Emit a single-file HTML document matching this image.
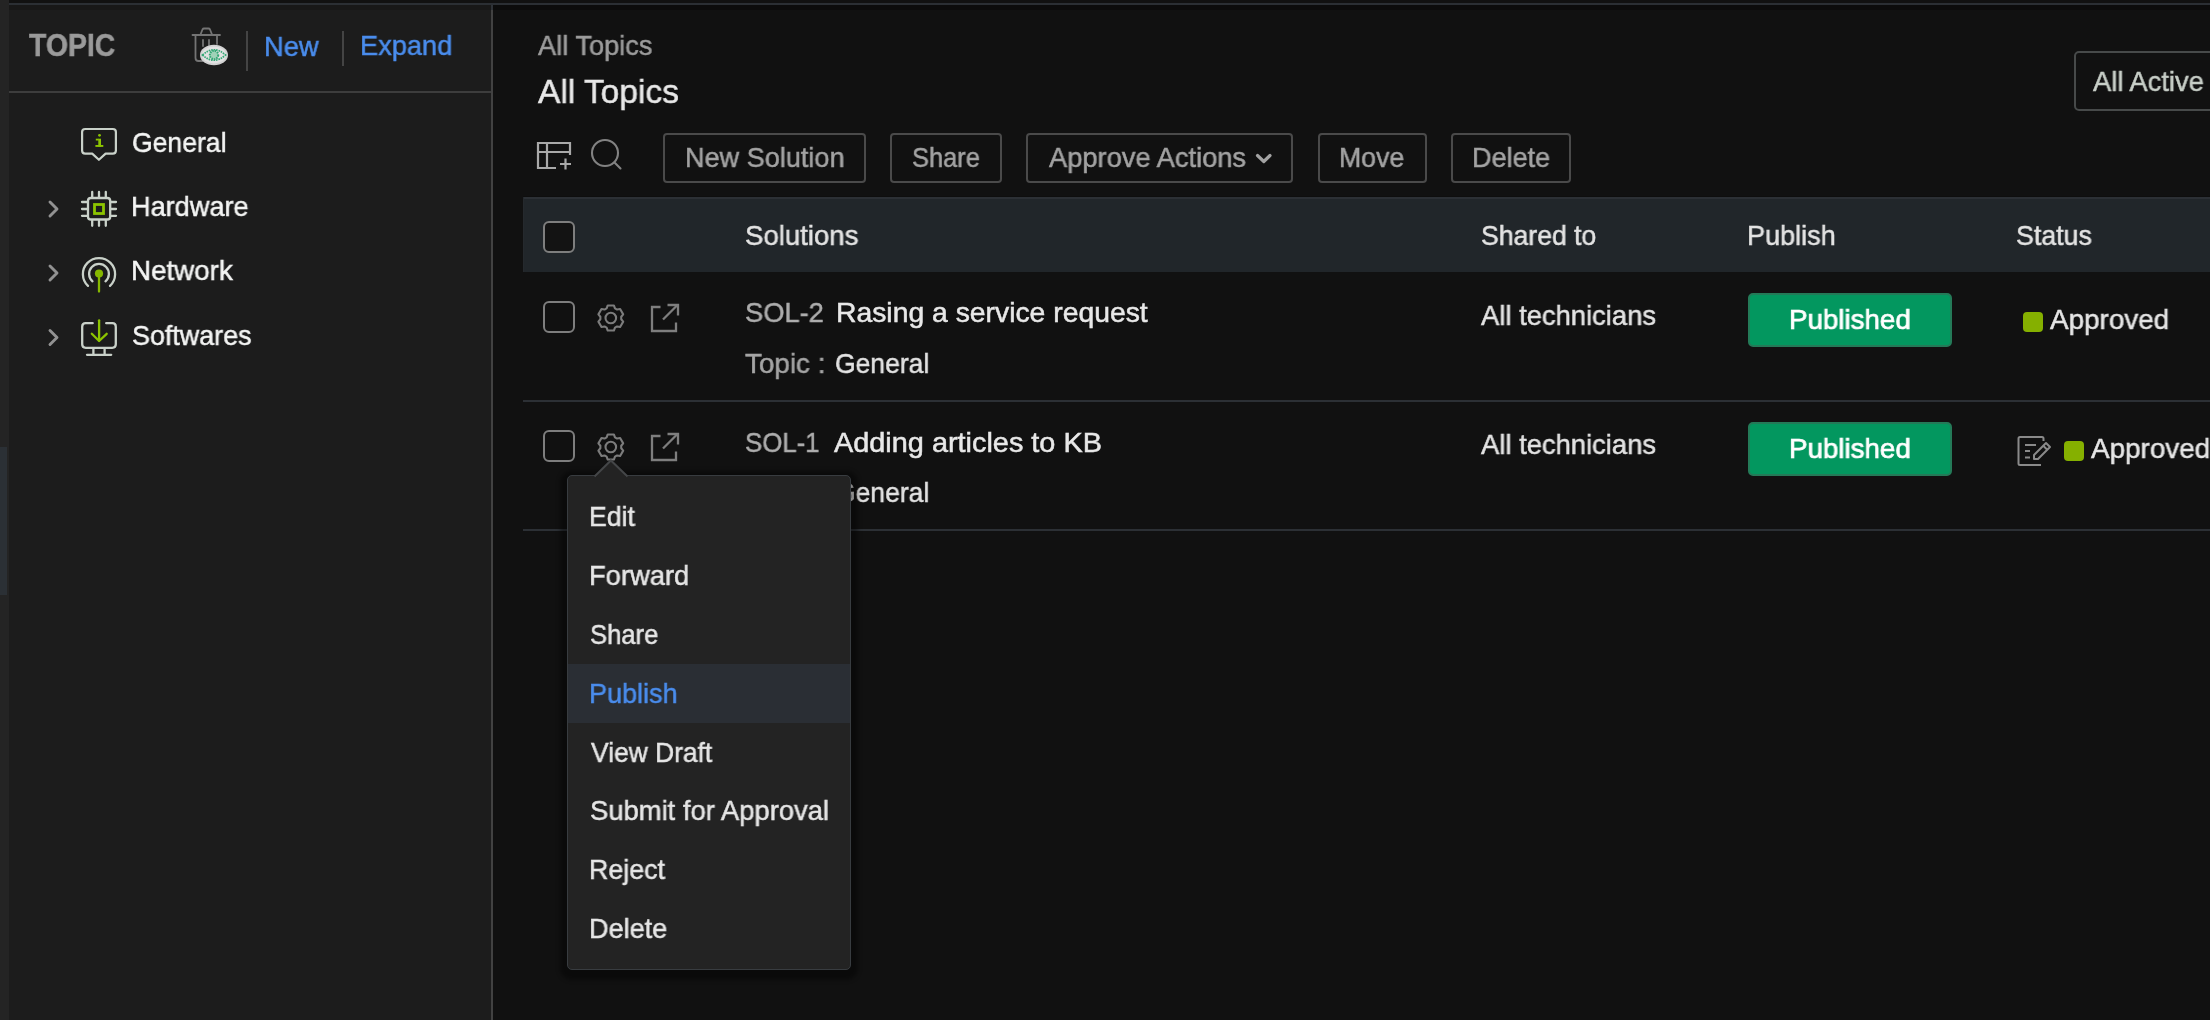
<!DOCTYPE html>
<html><head><meta charset="utf-8">
<style>
html,body{margin:0;padding:0;width:2210px;height:1020px;overflow:hidden;background:#111111;}
body{position:relative;font-family:"Liberation Sans",sans-serif;}
.a{position:absolute;box-sizing:border-box;}
.t{position:absolute;white-space:nowrap;line-height:1;transform-origin:0 0;will-change:transform;-webkit-text-stroke:0.5px currentColor;font-family:"Liberation Sans",sans-serif;}
.btn{position:absolute;box-sizing:border-box;border:2px solid #4a4a4a;border-radius:4px;top:133px;height:50px;}
svg{position:absolute;left:0;top:0;}
</style></head><body>
<!-- left strip -->
<div class="a" style="left:0;top:0;width:9px;height:1020px;background:#242424"></div>
<div class="a" style="left:0;top:447px;width:7px;height:148px;background:#2b3035"></div>
<!-- top band -->
<div class="a" style="left:9px;top:0;width:2201px;height:3px;background:#111111"></div>
<div class="a" style="left:9px;top:3px;width:2201px;height:2px;background:#2b2f34"></div>
<!-- sidebar -->
<div class="a" style="left:9px;top:5px;width:482px;height:1015px;background:#1c1c1c"></div>
<div class="a" style="left:9px;top:5px;width:482px;height:5px;background:#181818"></div>
<div class="a" style="left:491px;top:5px;width:2px;height:1015px;background:#424242"></div>
<div class="a" style="left:491px;top:5px;width:2px;height:5px;background:#2e3237"></div>
<div class="a" style="left:9px;top:91px;width:482px;height:2px;background:#3d3d3d"></div>
<!-- main top shadow -->
<div class="a" style="left:493px;top:5px;width:1717px;height:5px;background:#0c0c0c"></div>

<!-- table header -->
<div class="a" style="left:523px;top:196px;width:1687px;height:1px;background:#0e0e0e"></div>
<div class="a" style="left:523px;top:197px;width:1687px;height:75px;background:#21262a"></div>
<div class="a" style="left:523px;top:197px;width:1687px;height:2px;background:#2c3035"></div>
<div class="a" style="left:523px;top:197px;width:1px;height:75px;background:#25292d"></div>
<!-- row separators -->
<div class="a" style="left:523px;top:400px;width:1687px;height:2px;background:#2c3035"></div>
<div class="a" style="left:523px;top:529px;width:1687px;height:2px;background:#2c3035"></div>

<!-- toolbar buttons -->
<div class="btn" style="left:663px;width:203px"></div>
<div class="btn" style="left:890px;width:112px"></div>
<div class="btn" style="left:1026px;width:267px"></div>
<div class="btn" style="left:1318px;width:109px"></div>
<div class="btn" style="left:1451px;width:120px"></div>
<!-- All Active -->
<div class="a" style="left:2074px;top:51px;width:160px;height:60px;border:2px solid #474a4a;border-radius:5px"></div>

<!-- Published buttons -->
<div class="a" style="left:1748px;top:293px;width:204px;height:54px;background:#03975f;border:2px solid #247a58;border-radius:5px"></div>
<div class="a" style="left:1748px;top:422px;width:204px;height:54px;background:#03975f;border:2px solid #247a58;border-radius:5px"></div>
<!-- green status squares -->
<div class="a" style="left:2023px;top:312px;width:20px;height:20px;background:#85b000;border-radius:4px"></div>
<div class="a" style="left:2064px;top:441px;width:20px;height:20px;background:#85b000;border-radius:4px"></div>

<svg width="2210" height="1020" viewBox="0 0 2210 1020" fill="none">
  <!-- trash + eye -->
  <g stroke="#747474" stroke-width="1.8" stroke-linecap="round" stroke-linejoin="round">
    <path d="M192.5,35 H220"/>
    <path d="M200.5,34.5 L202.5,29.5 Q203,28.5 204,28.5 H208.5 Q209.5,28.5 210,29.5 L212,34.5"/>
    <path d="M195.5,36 V58 Q195.5,61 198.5,61 H203"/>
    <path d="M217,36 V44"/>
    <path d="M203,40 V46 M209,40 V45"/>
  </g>
  <ellipse cx="214" cy="55" rx="14" ry="10.2" fill="#d2d2d2"/>
  <ellipse cx="214" cy="55" rx="12" ry="8.5" fill="#e2e2e2"/>
  <path d="M202.5,55 Q214,44.5 225.5,55 Q214,65.5 202.5,55 Z" stroke="#33a775" stroke-width="1.7" fill="none" stroke-dasharray="1.6 0.9"/>
  <circle cx="214" cy="55" r="4.2" stroke="#33a775" stroke-width="2" fill="#9fd2b8" stroke-dasharray="1.6 0.9"/>
  <!-- header separators -->
  <path d="M247,31 V71 M343,31 V66" stroke="#444" stroke-width="2"/>

  <!-- General icon -->
  <path d="M85.2,129 H112.8 Q115.9,129 115.9,132.1 V150.5 Q115.9,153.6 112.8,153.6 H105.6 L98.9,159.8 L92.2,153.6 H85.2 Q82.1,153.6 82.1,150.5 V132.1 Q82.1,129 85.2,129 Z" stroke="#c9d1c9" stroke-width="2.2" stroke-linejoin="round"/>
  <g fill="#8cc400">
    <circle cx="99.5" cy="135.3" r="1.4"/>
    <rect x="98.3" y="138.7" width="2.7" height="8.1"/>
    <rect x="95.8" y="138.7" width="3" height="1.8"/>
    <rect x="95.4" y="145" width="7.9" height="1.9"/>
  </g>
  <!-- chevrons -->
  <g stroke="#929292" stroke-width="2.9" stroke-linecap="round" stroke-linejoin="round">
    <path d="M50,202 L57,209 L50,216"/>
    <path d="M50,266 L57,273 L50,280"/>
    <path d="M50,330.5 L57,337.5 L50,344.5"/>
  </g>
  <!-- Hardware chip icon -->
  <g stroke="#c9d1c9" stroke-width="2.3" stroke-linecap="round">
    <rect x="88" y="198" width="22.2" height="21.5" rx="2.8"/>
    <path d="M92.2,192 V197 M99,192 V197 M105.8,192 V197 M92.2,220.5 V225.8 M99,220.5 V225.8 M105.8,220.5 V225.8"/>
    <path d="M82,202 H87 M82,209 H87 M82,215.8 H87 M111.2,202 H116 M111.2,209 H116 M111.2,215.8 H116"/>
  </g>
  <rect x="94.5" y="204.5" width="9" height="9" stroke="#8cc400" stroke-width="2.8"/>
  <!-- Network icon -->
  <g stroke="#c9d1c9" stroke-width="2.3" stroke-linecap="round">
    <path d="M88,285.9 A16.1,16.1 0 1 1 110,285.9"/>
    <path d="M92.5,281.3 A9.9,9.9 0 1 1 105.5,281.3"/>
  </g>
  <circle cx="99" cy="273.5" r="4.1" fill="#86b800"/>
  <path d="M99,274 V291.5" stroke="#86b800" stroke-width="2.3" stroke-linecap="round"/>
  <!-- Softwares icon -->
  <g stroke="#c9d1c9" stroke-width="2.3" stroke-linecap="round">
    <path d="M92.7,323.2 H85.7 Q82.2,323.2 82.2,326.7 V344.3 Q82.2,347.8 85.7,347.8 H112.3 Q115.8,347.8 115.8,344.3 V326.7 Q115.8,323.2 112.3,323.2 H106.2"/>
    <path d="M93.4,349 V354.8 M104.6,349 V354.8 M87,354.8 H111.2"/>
  </g>
  <g stroke="#8cc400" stroke-width="2.3" stroke-linecap="round" stroke-linejoin="round">
    <path d="M99.1,320.3 V340.5"/>
    <path d="M91.8,333.8 L99.1,341 L106.7,333.8"/>
  </g>

  <!-- table add icon -->
  <g stroke="#a9a9a9" stroke-width="2.2">
    <path d="M556,168 H538 V143 H570 V155"/>
    <path d="M538,152 H570 M547,143 V168"/>
    <path d="M560,164 H571 M565.5,158.5 V169.5"/>
  </g>
  <!-- search -->
  <g stroke="#828282" stroke-width="2.1" stroke-linecap="round">
    <circle cx="605" cy="153" r="13"/>
    <path d="M614.5,162.5 L620.5,168.5"/>
  </g>
  <!-- approve actions chevron -->
  <path d="M1257.5,155.5 L1263.8,161.5 L1270,155.5" stroke="#a3a3a3" stroke-width="3.2" stroke-linecap="round" stroke-linejoin="round"/>

  <!-- header checkbox -->
  <rect x="544" y="222" width="30" height="30" rx="5" fill="#131313" stroke="#7e7e7e" stroke-width="2"/>
  <!-- row checkboxes -->
  <rect x="544" y="302" width="30" height="30" rx="5" stroke="#7e7e7e" stroke-width="2"/>
  <rect x="544" y="431" width="30" height="30" rx="5" stroke="#7e7e7e" stroke-width="2"/>
  <!-- gears -->
  <g stroke="#7c7c7c" stroke-width="2.1" stroke-linejoin="round">
    <path transform="translate(610.8,318)" d="M-4.17,-9.64 L-3.08,-12.53 L3.08,-12.53 L4.17,-9.64 L6.26,-8.43 L9.31,-8.93 L12.39,-3.60 L10.43,-1.21 L10.43,1.21 L12.39,3.60 L9.31,8.93 L6.26,8.43 L4.17,9.64 L3.08,12.53 L-3.08,12.53 L-4.17,9.64 L-6.26,8.43 L-9.31,8.93 L-12.39,3.60 L-10.43,1.21 L-10.43,-1.21 L-12.39,-3.60 L-9.31,-8.93 L-6.26,-8.43 Z"/>
    <circle cx="610.8" cy="318" r="5.3"/>
    <path transform="translate(610.8,447)" d="M-4.17,-9.64 L-3.08,-12.53 L3.08,-12.53 L4.17,-9.64 L6.26,-8.43 L9.31,-8.93 L12.39,-3.60 L10.43,-1.21 L10.43,1.21 L12.39,3.60 L9.31,8.93 L6.26,8.43 L4.17,9.64 L3.08,12.53 L-3.08,12.53 L-4.17,9.64 L-6.26,8.43 L-9.31,8.93 L-12.39,3.60 L-10.43,1.21 L-10.43,-1.21 L-12.39,-3.60 L-9.31,-8.93 L-6.26,-8.43 Z"/>
    <circle cx="610.8" cy="447" r="5.3"/>
  </g>
  <!-- external link icons -->
  <g stroke="#7e7e7e" stroke-width="2.3">
    <path d="M660.5,307 H652 V331 H676 V322.5"/>
    <path d="M663,319.5 L677,305.5"/>
    <path d="M667.5,305 H678 V315.5"/>
    <path d="M660.5,436 H652 V460 H676 V451.5"/>
    <path d="M663,448.5 L677,434.5"/>
    <path d="M667.5,434 H678 V444.5"/>
  </g>
  <!-- edit icon row 2 -->
  <g stroke="#8a8a8a" stroke-width="2" stroke-linejoin="round">
    <path d="M2041,465 H2020 Q2018.5,465 2018.5,463.5 V438.5 Q2018.5,437 2020,437 H2042 Q2043.5,437 2043.5,438.5 V441"/>
    <path d="M2025,445 H2036 M2025,451 H2030 M2025,457.5 H2030"/>
    <path d="M2034,455 L2046,443 L2050,447 L2038,459 L2034,459 Z"/>
    <path d="M2043.5,446 L2047,449.5"/>
  </g>
</svg>

<div class="t" style="left:28.80px;top:30px;font-size:31px;font-weight:700;color:#9a9a9a;transform:scaleX(0.9161);">TOPIC</div>
<div class="t" style="left:263.55px;top:33px;font-size:28px;font-weight:400;color:#4a8ded;transform:scaleX(0.9759);">New</div>
<div class="t" style="left:359.56px;top:32px;font-size:28px;font-weight:400;color:#4a8ded;transform:scaleX(0.9714);">Expand</div>
<div class="t" style="left:131.55px;top:129px;font-size:28px;font-weight:400;color:#f4f5f4;transform:scaleX(0.9485);">General</div>
<div class="t" style="left:130.76px;top:193px;font-size:28px;font-weight:400;color:#f4f5f4;transform:scaleX(0.9686);">Hardware</div>
<div class="t" style="left:130.92px;top:257px;font-size:28px;font-weight:400;color:#f4f5f4;transform:scaleX(0.9911);">Network</div>
<div class="t" style="left:131.94px;top:322px;font-size:28px;font-weight:400;color:#f4f5f4;transform:scaleX(0.9602);">Softwares</div>
<div class="t" style="left:538.00px;top:32px;font-size:28px;font-weight:400;color:#9c9c9c;transform:scaleX(0.9718);">All Topics</div>
<div class="t" style="left:538.00px;top:74px;font-size:34px;font-weight:400;color:#e8e8e8;transform:scaleX(0.9859);">All Topics</div>
<div class="t" style="left:684.97px;top:144px;font-size:28px;font-weight:400;color:#a3a3a3;transform:scaleX(0.9671);">New Solution</div>
<div class="t" style="left:912.29px;top:144px;font-size:28px;font-weight:400;color:#a3a3a3;transform:scaleX(0.9082);">Share</div>
<div class="t" style="left:1049.40px;top:144px;font-size:28px;font-weight:400;color:#a3a3a3;transform:scaleX(0.9741);">Approve Actions</div>
<div class="t" style="left:1339.30px;top:144px;font-size:28px;font-weight:400;color:#a3a3a3;transform:scaleX(0.9515);">Move</div>
<div class="t" style="left:1472.47px;top:144px;font-size:28px;font-weight:400;color:#a3a3a3;transform:scaleX(0.9667);">Delete</div>
<div class="t" style="left:2092.70px;top:68px;font-size:28px;font-weight:400;color:#c8cfc8;transform:scaleX(0.9761);">All Active</div>
<div class="t" style="left:745.02px;top:222px;font-size:28px;font-weight:400;color:#e3e3e3;transform:scaleX(0.9850);">Solutions</div>
<div class="t" style="left:1481.05px;top:222px;font-size:28px;font-weight:400;color:#e3e3e3;transform:scaleX(0.9496);">Shared to</div>
<div class="t" style="left:1747.07px;top:222px;font-size:28px;font-weight:400;color:#e3e3e3;transform:scaleX(0.9659);">Publish</div>
<div class="t" style="left:2016.34px;top:222px;font-size:28px;font-weight:400;color:#e3e3e3;transform:scaleX(0.9551);">Status</div>
<div class="t" style="left:744.53px;top:299px;font-size:28px;font-weight:400;color:#adadad;transform:scaleX(0.9747);">SOL-2</div>
<div class="t" style="left:836.28px;top:299px;font-size:28px;font-weight:400;color:#e8e8e8;transform:scaleX(1.0114);">Rasing a service request</div>
<div class="t" style="left:744.51px;top:350px;font-size:28px;font-weight:400;color:#a5a5a5;transform:scaleX(0.9936);">Topic :</div>
<div class="t" style="left:834.85px;top:350px;font-size:28px;font-weight:400;color:#e3e3e3;transform:scaleX(0.9464);">General</div>
<div class="t" style="left:1481.40px;top:302px;font-size:28px;font-weight:400;color:#e3e3e3;transform:scaleX(0.9781);">All technicians</div>
<div class="t" style="left:1788.72px;top:306px;font-size:28px;font-weight:400;color:#ffffff;transform:scaleX(0.9899);-webkit-text-stroke:0.7px #ffffff;">Published</div>
<div class="t" style="left:2049.60px;top:306px;font-size:28px;font-weight:400;color:#e6e6e6;transform:scaleX(0.9941);">Approved</div>
<div class="t" style="left:744.58px;top:429px;font-size:28px;font-weight:400;color:#adadad;transform:scaleX(0.9215);">SOL-1</div>
<div class="t" style="left:834.00px;top:429px;font-size:28px;font-weight:400;color:#e8e8e8;transform:scaleX(1.0309);">Adding articles to KB</div>
<div class="t" style="left:744.51px;top:479px;font-size:28px;font-weight:400;color:#a5a5a5;transform:scaleX(0.9936);">Topic :</div>
<div class="t" style="left:834.85px;top:479px;font-size:28px;font-weight:400;color:#e3e3e3;transform:scaleX(0.9464);">General</div>
<div class="t" style="left:1481.40px;top:431px;font-size:28px;font-weight:400;color:#e3e3e3;transform:scaleX(0.9781);">All technicians</div>
<div class="t" style="left:1788.72px;top:435px;font-size:28px;font-weight:400;color:#ffffff;transform:scaleX(0.9899);-webkit-text-stroke:0.7px #ffffff;">Published</div>
<div class="t" style="left:2091.00px;top:435px;font-size:28px;font-weight:400;color:#e6e6e6;transform:scaleX(0.9941);">Approved</div>

<!-- context menu -->
<div class="a" style="left:567px;top:475px;width:284px;height:495px;background:#232323;border:1px solid #383c40;border-radius:5px;box-shadow:0 3px 4px 7px rgba(0,0,0,0.38)"></div>
<svg width="2210" height="1020" viewBox="0 0 2210 1020" fill="none" style="position:absolute;left:0;top:0">
  <path d="M594.5,476.5 L610.9,460.5 L627.5,476.5" fill="#232323" stroke="#444648" stroke-width="2"/>
  <rect x="596" y="476" width="30" height="2" fill="#232323"/>
</svg>
<div class="a" style="left:568px;top:664px;width:282px;height:59px;background:#2a2e34"></div>
<div class="t" style="left:588.80px;top:503px;font-size:28px;font-weight:400;color:#e6e6e6;transform:scaleX(0.9500);">Edit</div>
<div class="t" style="left:588.75px;top:562px;font-size:28px;font-weight:400;color:#e6e6e6;transform:scaleX(0.9768);">Forward</div>
<div class="t" style="left:589.79px;top:621px;font-size:28px;font-weight:400;color:#e6e6e6;transform:scaleX(0.9137);">Share</div>
<div class="t" style="left:588.77px;top:680px;font-size:28px;font-weight:400;color:#4a8ded;transform:scaleX(0.9648);">Publish</div>
<div class="t" style="left:590.70px;top:739px;font-size:28px;font-weight:400;color:#e6e6e6;transform:scaleX(0.9426);">View Draft</div>
<div class="t" style="left:589.72px;top:797px;font-size:28px;font-weight:400;color:#e6e6e6;transform:scaleX(0.9785);">Submit for Approval</div>
<div class="t" style="left:588.78px;top:856px;font-size:28px;font-weight:400;color:#e6e6e6;transform:scaleX(0.9584);">Reject</div>
<div class="t" style="left:588.76px;top:915px;font-size:28px;font-weight:400;color:#e6e6e6;transform:scaleX(0.9679);">Delete</div>
</body></html>
